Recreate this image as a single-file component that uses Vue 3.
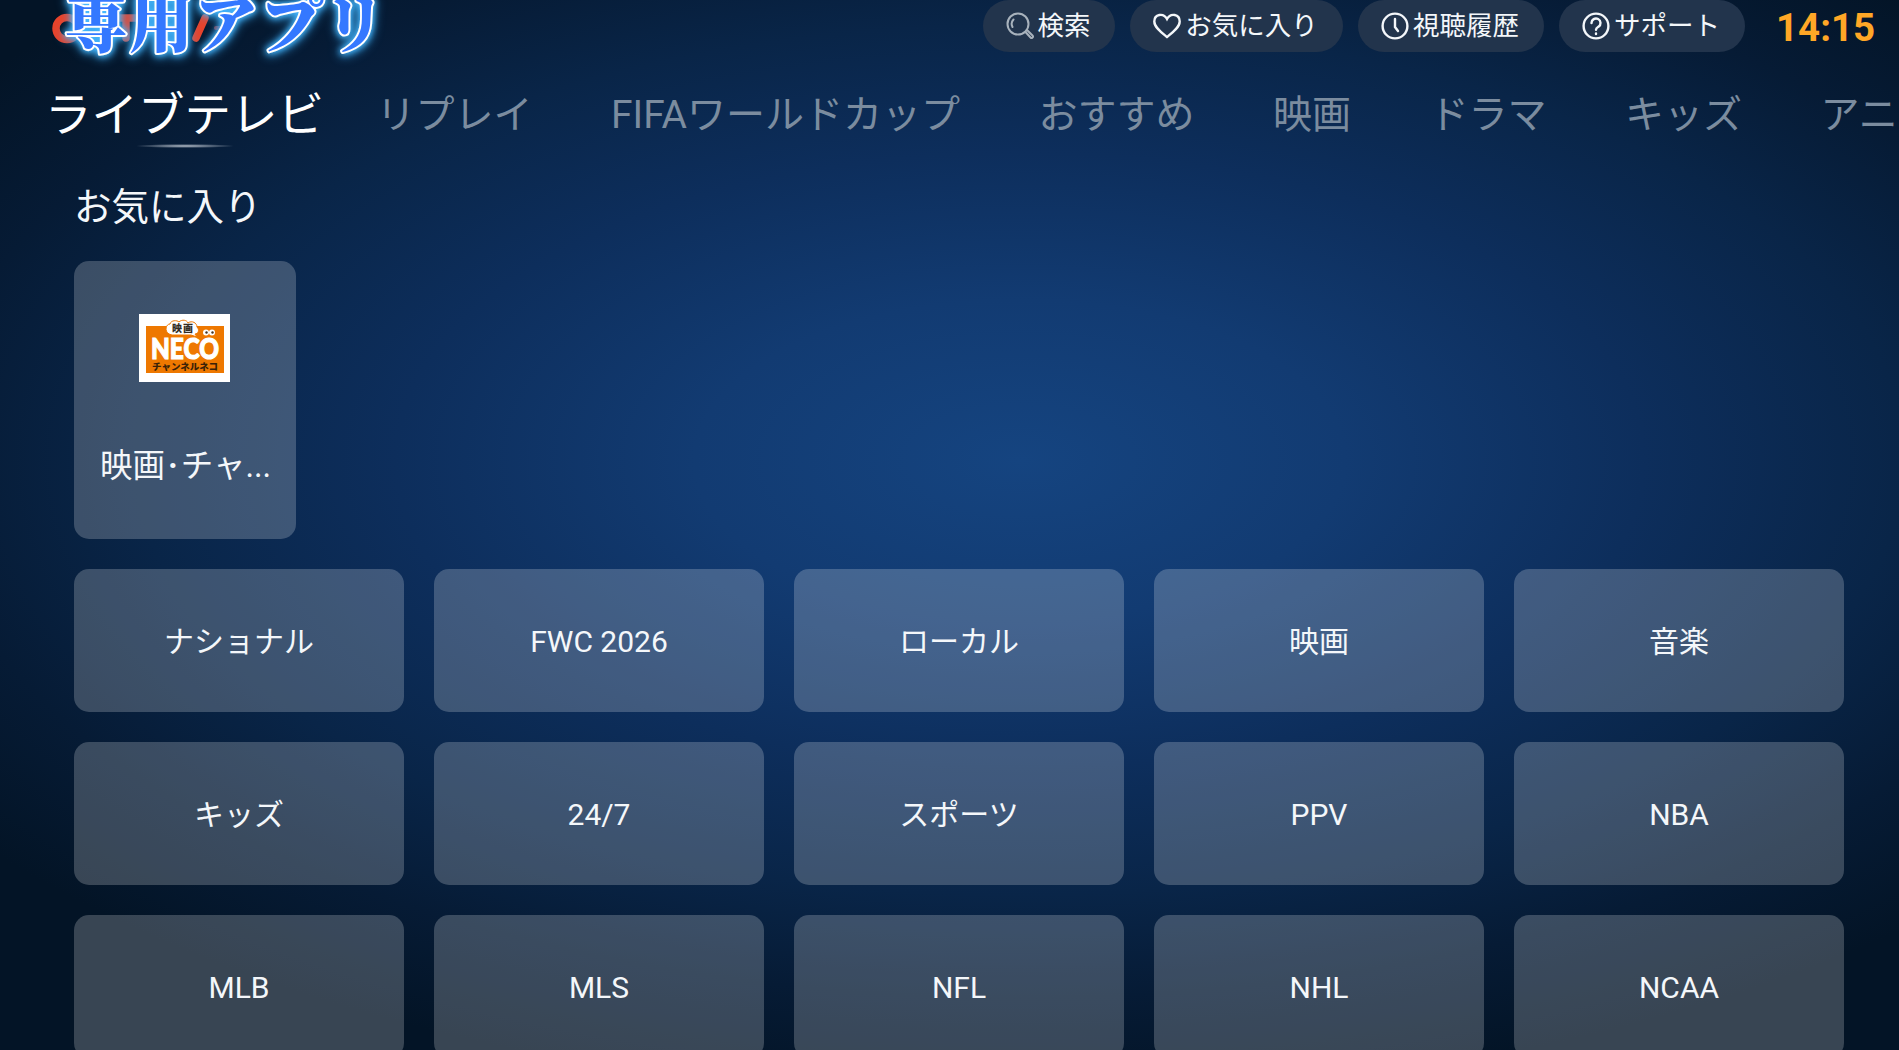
<script setup>
const actions = [
  { icon: 'search', label: '検索' },
  { icon: 'heart', label: 'お気に入り' },
  { icon: 'clock', label: '視聴履歴' },
  { icon: 'help', label: 'サポート' },
]

const tabs = ['ライブテレビ', 'リプレイ', 'FIFAワールドカップ', 'おすすめ', '映画', 'ドラマ', 'キッズ', 'アニ']

const categories = [
  'ナショナル', 'FWC 2026', 'ローカル', '映画', '音楽',
  'キッズ', '24/7', 'スポーツ', 'PPV', 'NBA',
  'MLB', 'MLS', 'NFL', 'NHL', 'NCAA',
]
</script>

<template>
  <div class="screen">
    <header class="topbar">
      <div class="brand">
        <svg class="brand-logo" width="190" height="44" viewBox="0 0 190 44">
          <g fill="none" stroke="#e8432b" stroke-width="7.5" stroke-linecap="round">
            <circle cx="17" cy="28.5" r="11" />
            <path d="M66 18h20M76 18v20M146 38l9-20" />
          </g>
          <path d="M166 28h16" stroke="#8d3036" stroke-width="4" stroke-linecap="round" />
        </svg>
        <svg class="brand-title" width="380" height="80" viewBox="0 0 380 80">
          <text x="34" y="47" textLength="322">専用アプリ</text>
        </svg>
      </div>

      <nav class="actions">
        <button v-for="a in actions" :key="a.label" class="pill" :class="a.icon">
          <svg v-if="a.icon === 'search'" class="icon" viewBox="0 0 28 28">
            <circle cx="12" cy="12" r="10.5" />
            <path d="M6.5 15a6.5 6.5 0 0 1 1-7.5M19.5 20l5 5.500a1.3 1.3 0 0 0 2-2l-5-5" />
          </svg>
          <svg v-else-if="a.icon === 'heart'" class="icon" viewBox="0 0 28 28">
            <path d="M14 25C9 21 1.3 15.5 1.3 9.500 1.3 2 10.5 0.500 14 7 17.500 0.500 26.700 2 26.700 9.500 26.700 15.500 19 21 14 25Z" />
          </svg>
          <svg v-else-if="a.icon === 'clock'" class="icon" viewBox="0 0 28 28">
            <circle cx="14" cy="14" r="12.4" />
            <path d="M14 7v8l3 4" />
          </svg>
          <svg v-else class="icon" viewBox="0 0 28 28">
            <circle cx="14" cy="14" r="12.4" />
            <path d="M9.5 11a4.500 4.500 0 1 1 7 3.700c-1.500 1-2.500 1.600-2.500 3M14 21.500v.5" />
          </svg>
          <span>{{ a.label }}</span>
        </button>
      </nav>
      <time class="time">14:15</time>
    </header>

    <nav class="tabs">
      <a v-for="(tab, i) in tabs" :key="tab" class="tab" :class="{ active: i === 0 }">{{ tab }}</a>
    </nav>

    <main class="content">
      <h2 class="section-title">お気に入り</h2>

      <article class="favorite">
        <svg class="channel-logo" width="91" height="68" viewBox="0 0 91 68">
          <rect width="91" height="68" fill="#fff" />
          <rect x="7" y="12" width="78" height="47" fill="#ee7800" />
          <path
            d="M30 20c-5-3-3-10 1-10 1-4 7-4 9-2 3-3 8-2 9 1 4-3 9 0 9 4 3 3 1 7-2 7l2 3-6-2H33z"
            fill="#fff"
            stroke="#ee7800"
          />
          <text class="logo-small" x="33" y="18" textLength="21">映画</text>
          <text class="logo-name" x="12" y="45" textLength="68" lengthAdjust="spacingAndGlyphs">NECO</text>
          <g fill="#fff">
            <circle cx="67" cy="18.5" r="3" />
            <circle cx="73" cy="18.5" r="3" />
          </g>
          <g fill="#443322">
            <circle cx="67.5" cy="18.5" r="1.2" />
            <circle cx="73.5" cy="18.5" r="1.2" />
          </g>
          <text class="logo-kana" x="13" y="56" textLength="66" lengthAdjust="spacingAndGlyphs">チャンネルネコ</text>
        </svg>
        <p class="channel-name">映画<span class="dot">·</span>チャ...</p>
      </article>

      <section class="grid">
        <button v-for="c in categories" :key="c" class="tile">{{ c }}</button>
      </section>
    </main>
  </div>
</template>

<style>
body {
  margin: 0;
  overflow: hidden;
}
</style>

<style scoped>
.screen {
  width: 100vw;
  height: 100vh;
  overflow: hidden;
  box-sizing: border-box;
  color: #f4f7fa;
  font-family: Roboto, 'Noto Sans CJK JP', sans-serif;
  background: radial-gradient(
    ellipse 1300px 640px at 1020px 460px,
    #154480 0%,
    #123b72 25%,
    #0d2e5c 48%,
    #092548 68%,
    #061b35 84%,
    #031426 100%
  );
}

button {
  border: 0;
  padding: 0;
  color: inherit;
  font-family: inherit;
}

/* TOP BAR */
.topbar {
  display: flex;
  height: 52px;
  padding-right: 24px;
}

.brand {
  position: relative;
  flex: 1;
}

.brand-logo {
  position: absolute;
  left: 50px;
  top: 0;
}

.brand-title {
  position: absolute;
  left: 30px;
  top: 0;
  overflow: visible;
  filter: drop-shadow(0 0 3px #4bb9ff) drop-shadow(0 1px 5px #36aaf5);
}

.brand-title text {
  font-family: 'Noto Serif CJK JP', 'Noto Sans CJK JP', serif;
  font-size: 64px;
  font-weight: 900;
  fill: #3478ff;
  stroke: #fff;
  stroke-width: 4px;
  stroke-linejoin: round;
  paint-order: stroke;
}

.actions {
  display: flex;
  gap: 15px;
}

.pill {
  display: flex;
  align-items: center;
  justify-content: center;
  gap: 4px;
  width: 184px;
  height: 52px;
  padding-right: 2px;
  border-radius: 26px;
  background: #22344c;
  font-size: 26.5px;
  line-height: 32px;
  box-sizing: content-box;
}

.pill.search {
  width: 130px;
}

.pill.heart {
  width: 211px;
}

.icon {
  width: 28px;
  height: 28px;
  fill: none;
  stroke: currentColor;
  stroke-width: 2.4;
  stroke-linecap: round;
}

.pill.search .icon {
  stroke: #a8b2bc;
  stroke-width: 2;
}

.time {
  width: 100px;
  margin-left: 31px;
  margin-right: -1px;
  line-height: 56px;
  font-size: 38.5px;
  font-weight: 700;
  color: #ffa726;
}

/* TABS */
.tabs {
  display: flex;
  align-items: center;
  gap: 78.5px;
  height: 104px;
  padding: 13px 0 0 45px;
  box-sizing: border-box;
  white-space: nowrap;
}

.tab {
  flex: none;
  font-size: 39px;
  color: #7b8c9f;
}

.tab.active {
  position: relative;
  margin-right: -26px;
  font-size: 46.5px;
  color: #fff;
}

.tab.active::after {
  content: '';
  position: absolute;
  left: 50%;
  bottom: -4px;
  width: 98px;
  height: 4px;
  transform: translateX(-50%);
  background: radial-gradient(ellipse at center, #b8c1cc, transparent 72%);
}

/* CONTENT */
.content {
  padding: 0 55px 0 74px;
}

.section-title {
  height: 105px;
  margin: 0;
  line-height: 103px;
  font-size: 37.5px;
  font-weight: 400;
}

.favorite {
  display: flex;
  flex-direction: column;
  align-items: center;
  width: 222px;
  height: 278px;
  padding: 53px 1px 0 0;
  box-sizing: border-box;
  border-radius: 15px;
  background: rgba(255, 255, 255, 0.21);
}

.channel-logo {
  flex: none;
}

.logo-small {
  font: 900 10px 'Noto Sans CJK JP', sans-serif;
  fill: #332c24;
}

.logo-name {
  font: 900 29px Lato, sans-serif;
  fill: #fff;
  stroke: #fff;
  stroke-width: 1.2px;
}

.logo-kana {
  font: 900 9px 'Noto Sans CJK JP', sans-serif;
  fill: #3a2208;
}

.channel-name {
  margin: 60px 0 0 2px;
  line-height: 48px;
  font-size: 32.5px;
}

.dot {
  padding: 0 3px;
  font-weight: 700;
}

.grid {
  display: grid;
  grid-template-columns: repeat(5, 330px);
  grid-auto-rows: 143px;
  gap: 30px;
  margin-top: 30px;
}

.tile {
  padding-top: 2px;
  border-radius: 15px;
  background: rgba(255, 255, 255, 0.21);
  font-size: 30px;
  line-height: 36px;
}
</style>
